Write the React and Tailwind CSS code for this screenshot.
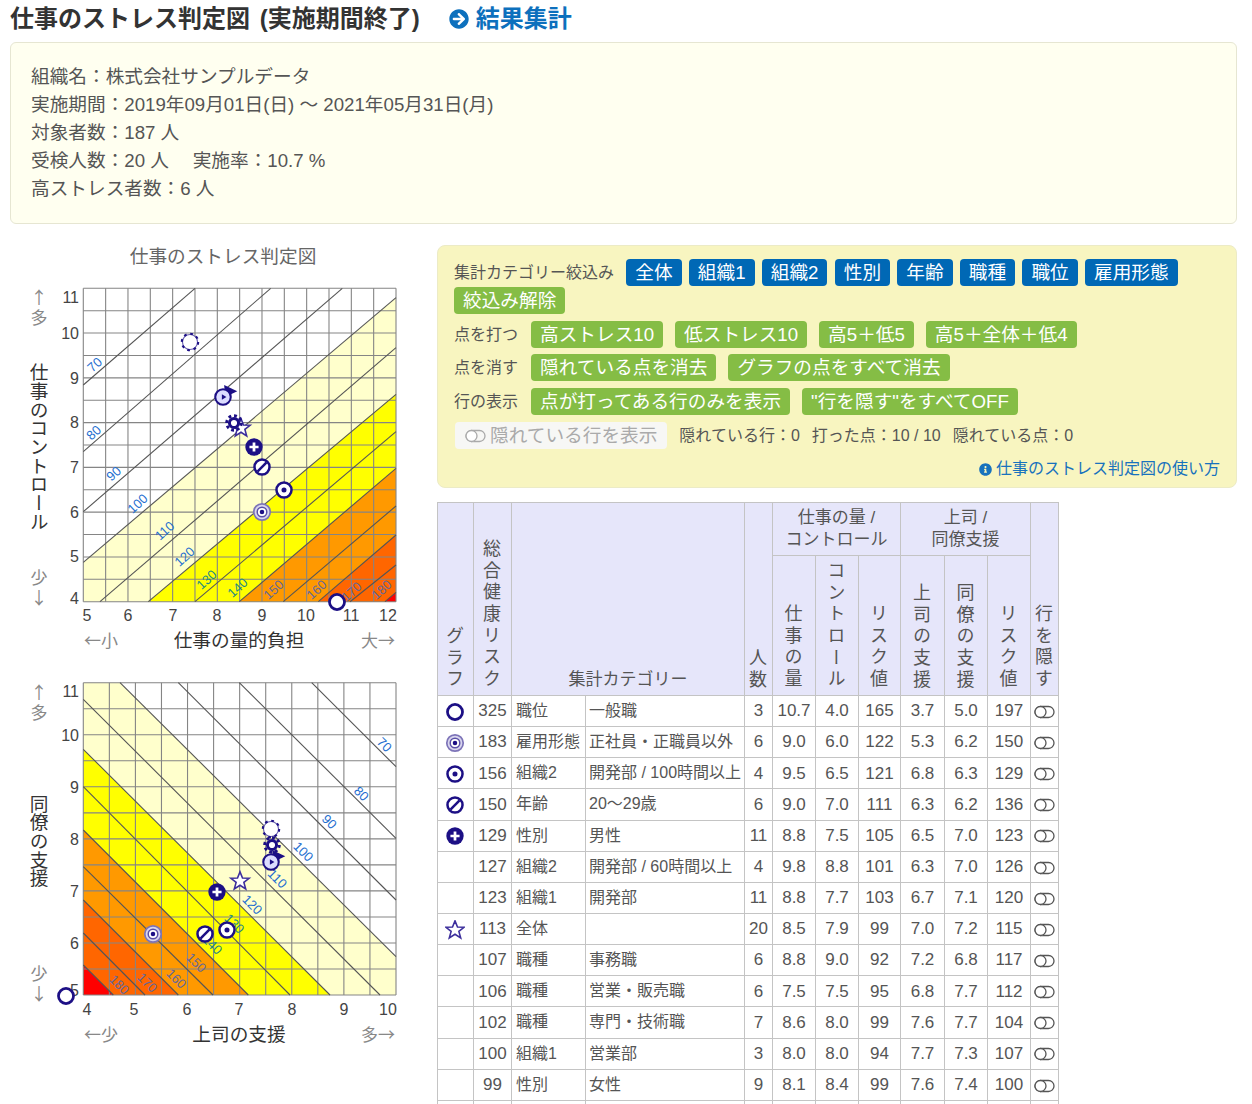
import { FaArrowCircleRight, FaInfoCircle } from "react-icons/fa";

const NAVY = "#1c0f85";

const rows = [
  ["ring", "325", "職位", "一般職", "3", "10.7", "4.0", "165", "3.7", "5.0", "197"],
  ["target", "183", "雇用形態", "正社員・正職員以外", "6", "9.0", "6.0", "122", "5.3", "6.2", "150"],
  ["dot", "156", "組織2", "開発部 / 100時間以上", "4", "9.5", "6.5", "121", "6.8", "6.3", "129"],
  ["slash", "150", "年齢", "20～29歳", "6", "9.0", "7.0", "111", "6.3", "6.2", "136"],
  ["plus", "129", "性別", "男性", "11", "8.8", "7.5", "105", "6.5", "7.0", "123"],
  ["", "127", "組織2", "開発部 / 60時間以上", "4", "9.8", "8.8", "101", "6.3", "7.0", "126"],
  ["", "123", "組織1", "開発部", "11", "8.8", "7.7", "103", "6.7", "7.1", "120"],
  ["star", "113", "全体", "", "20", "8.5", "7.9", "99", "7.0", "7.2", "115"],
  ["", "107", "職種", "事務職", "6", "8.8", "9.0", "92", "7.2", "6.8", "117"],
  ["", "106", "職種", "営業・販売職", "6", "7.5", "7.5", "95", "6.8", "7.7", "112"],
  ["", "102", "職種", "専門・技術職", "7", "8.6", "8.0", "99", "7.6", "7.7", "104"],
  ["", "100", "組織1", "営業部", "3", "8.0", "8.0", "94", "7.7", "7.3", "107"],
  ["", "99", "性別", "女性", "9", "8.1", "8.4", "99", "7.6", "7.4", "100"],
];

const chartOne = {
  height: 430,
  top: 53.3,
  bottom: 366.7,
  title: "仕事のストレス判定図",
  xTitle: "仕事の量的負担",
  yTitle: "仕事のコントロール",
  yTitleY: 212,
  low: "←小",
  high: "大→",
  upper: 54,
  lower: 334,
  xLabelY: 386,
  axisY: 412,
  gridX: 14,
  gridY: 14,
  bands: [
    ["#ffffcc", "83.3,327.3 396,62.7 396,366.7 83.3,366.7"],
    ["#ffff00", "148.3,366.7 396,159.3 396,366.7"],
    ["#ff9900", "239.3,366.7 396,233.3 396,366.7"],
    ["#ff6600", "318.3,366.7 396,300 396,366.7"],
    ["#ff0000", "385,366.7 396,357.3 396,366.7"],
  ],
  lines: [
    [83.3, 150, 195, 53.3],
    [83.3, 216.7, 270.7, 53.3],
    [83.3, 276.7, 342.3, 53.3],
    [83.3, 327.3, 396, 62.7],
    [100, 366.7, 396, 112.7],
    [148.3, 366.7, 396, 159.3],
    [195, 366.7, 396, 196.7],
    [239.3, 366.7, 396, 233.3],
    [283.3, 366.7, 396, 271],
    [318.3, 366.7, 396, 300],
    [350, 366.7, 396, 330],
    [385, 366.7, 396, 357.3],
  ],
  angle: -42,
  risk: [
    ["70", 95, 130, "#1f6fd0"],
    ["80", 94, 198, "#1f6fd0"],
    ["90", 114, 239, "#1f6fd0"],
    ["100", 138, 269, "#1f6fd0"],
    ["110", 165, 296, "#1f6fd0"],
    ["120", 185, 322, "#1f6fd0"],
    ["130", 207, 345, "#1f8a80"],
    ["140", 238, 353, "#1f8a80"],
    ["150", 274, 355, "#66689a"],
    ["160", 317, 355, "#66689a"],
    ["170", 352, 357, "#66689a"],
    ["180", 382, 355, "#66689a"],
  ],
  yLabels: [["11", 62], ["10", 98], ["9", 143], ["8", 187], ["7", 232], ["6", 277], ["5", 321], ["4", 363]],
  xLabels: [["5", 87], ["6", 128], ["7", 173], ["8", 217], ["9", 262], ["10", 306], ["11", 351], ["12", 388]],
  marks: [
    ["dashed", 190, 107],
    ["flag", 223, 162],
    ["star", 241, 193],
    ["gear", 234, 188],
    ["plus", 254, 212],
    ["slash", 262, 232],
    ["dot", 284, 255],
    ["target", 262, 277],
    ["ring", 337, 367],
  ],
};

const chartTwo = {
  height: 434,
  top: 12.7,
  bottom: 325,
  xTitle: "上司の支援",
  yTitle: "同僚の支援",
  yTitleY: 171,
  low: "←少",
  high: "多→",
  upper: 14,
  lower: 295,
  xLabelY: 345,
  axisY: 371,
  gridX: 12,
  gridY: 12,
  bands: [
    ["#ffffcc", "83.3,12.7 120,12.7 396,286.7 396,325 83.3,325"],
    ["#ffff00", "83.3,79.3 330,325 83.3,325"],
    ["#ff9900", "83.3,160 248.3,325 83.3,325"],
    ["#ff6600", "83.3,230 178.3,325 83.3,325"],
    ["#ff0000", "83.3,295 113.3,325 83.3,325"],
  ],
  lines: [
    [311.7, 12.7, 396, 96.7],
    [239.3, 12.7, 396, 168.3],
    [178.3, 12.7, 396, 230],
    [120, 12.7, 396, 286.7],
    [83.3, 29.3, 380, 325],
    [83.3, 79.3, 330, 325],
    [83.3, 116.7, 290, 325],
    [83.3, 160, 248.3, 325],
    [83.3, 196.7, 213, 325],
    [83.3, 230, 178.3, 325],
    [83.3, 263, 145, 325],
    [83.3, 295, 113.3, 325],
  ],
  angle: 45,
  risk: [
    ["70", 384, 75, "#1f6fd0"],
    ["80", 361, 124, "#1f6fd0"],
    ["90", 329, 152, "#1f6fd0"],
    ["100", 303, 182, "#1f6fd0"],
    ["110", 277, 209, "#1f6fd0"],
    ["120", 252, 235, "#1f6fd0"],
    ["130", 234, 254, "#1f8a80"],
    ["140", 212, 275, "#1f8a80"],
    ["150", 196, 293, "#66689a"],
    ["160", 176, 309, "#66689a"],
    ["170", 147, 313, "#66689a"],
    ["180", 119, 315, "#66689a"],
  ],
  yLabels: [["11", 21], ["10", 65], ["9", 117], ["8", 169], ["7", 221], ["6", 273], ["5", 320]],
  xLabels: [["4", 87], ["5", 134], ["6", 187], ["7", 239], ["8", 292], ["9", 344], ["10", 388]],
  marks: [
    ["dashed", 271, 159],
    ["gear", 272, 175],
    ["flag", 271, 192],
    ["star", 240, 211],
    ["plus", 217, 222],
    ["dot", 227, 260],
    ["slash", 205, 264],
    ["target", 153, 264],
    ["ring", 66, 326],
  ],
};

// the point markers, same drawing on the charts and in the table
const Mark = ({ type, x, y }) => {
  return (
    <g transform={`translate(${x} ${y}) scale(1.14)`}>
      {type === "ring" && <circle r="6.6" fill="#fff" stroke={NAVY} strokeWidth="2.4" />}
      {type === "dot" && (
        <>
          <circle r="6.6" fill="#fff" stroke={NAVY} strokeWidth="2.2" />
          <circle r="2.2" fill={NAVY} />
        </>
      )}
      {type === "target" && (
        <>
          <circle r="7.2" fill="#d9d6ee" stroke="#7d74b8" strokeWidth="1.5" />
          <circle r="4.2" fill="#fff" stroke="#5b50a8" strokeWidth="1.3" />
          <circle r="2" fill={NAVY} />
        </>
      )}
      {type === "slash" && (
        <>
          <circle r="6.6" fill="#fff" stroke={NAVY} strokeWidth="2.2" />
          <path d="M-4 4 L4 -4" stroke={NAVY} strokeWidth="2.2" />
        </>
      )}
      {type === "plus" && (
        <>
          <circle r="7.6" fill={NAVY} />
          <path d="M-4 0 H4 M0 -4 V4" stroke="#fff" strokeWidth="2.4" />
        </>
      )}
      {type === "star" && (
        <polygon
          points="0,-8 2.2,-2.6 8,-2.4 3.4,1.2 5,7 0,3.7 -5,7 -3.4,1.2 -8,-2.4 -2.2,-2.6"
          fill="#fff"
          stroke="#3d2f9c"
          strokeWidth="1.4"
        />
      )}
      {type === "gear" && (
        <>
          <circle r="6.4" fill="none" stroke={NAVY} strokeWidth="2.6" strokeDasharray="2.5 2.5" />
          <circle r="4" fill="#fff" stroke={NAVY} strokeWidth="2.6" />
        </>
      )}
      {type === "dashed" && (
        <>
          <circle r="6.6" fill="#fff" stroke="#6a60b0" strokeWidth="1" />
          <circle r="7.2" fill="none" stroke={NAVY} strokeWidth="1.8" strokeDasharray="2.4 3.25" />
        </>
      )}
      {type === "flag" && (
        <>
          <polygon points="1,-10.5 12.5,-5 2,0" fill={NAVY} />
          <circle r="6.8" fill="#dcdcff" stroke={NAVY} strokeWidth="1.8" />
          <polygon points="-1,-2.5 3,0 -1,2.5" fill={NAVY} />
        </>
      )}
    </g>
  );
};

const Chart = ({ data }) => {
  const { top, bottom } = data;
  const left = 83.3;
  const right = 396;
  const stepX = (right - left) / data.gridX;
  const stepY = (bottom - top) / data.gridY;

  return (
    <svg width="420" height={data.height} viewBox={`0 0 420 ${data.height}`} className="block shrink-0">
      {data.title && (
        <text x="223" y="28" textAnchor="middle" fontSize="18.67" fill="#666">
          {data.title}
        </text>
      )}
      <rect x={left} y={top} width={right - left} height={bottom - top} fill="#fff" />
      {data.bands.map(([color, points]) => (
        <polygon key={color} points={points} fill={color} />
      ))}
      {Array.from({ length: data.gridX + 1 }).map((_, i) => (
        <line key={i} x1={left + i * stepX} x2={left + i * stepX} y1={top} y2={bottom} stroke="#858585" strokeWidth="1.1" />
      ))}
      {Array.from({ length: data.gridY + 1 }).map((_, i) => (
        <line key={i} x1={left} x2={right} y1={top + i * stepY} y2={top + i * stepY} stroke="#858585" strokeWidth="1.1" />
      ))}
      {data.lines.map((l, i) => (
        <line key={i} x1={l[0]} y1={l[1]} x2={l[2]} y2={l[3]} stroke="#555" strokeWidth="1.1" />
      ))}
      {data.risk.map(([label, x, y, color]) => (
        <text
          key={label}
          x={x}
          y={y + 4}
          textAnchor="middle"
          fontSize="13"
          fill={color}
          transform={`rotate(${data.angle} ${x} ${y})`}
        >
          {label}
        </text>
      ))}
      {data.yLabels.map(([label, y]) => (
        <text key={label} x="79" y={y + 6} textAnchor="end" fontSize="16" fill="#444">
          {label}
        </text>
      ))}
      {data.xLabels.map(([label, x]) => (
        <text key={label} x={x} y={data.xLabelY} textAnchor="middle" fontSize="16" fill="#444">
          {label}
        </text>
      ))}
      <g
        className="font-['Noto_Sans_CJK_JP',sans-serif] [writing-mode:vertical-rl] [text-orientation:upright]"
        fontSize="17"
        fill="#888"
        letterSpacing="3.5"
      >
        <text x="39" y={data.upper}>↑多</text>
        <text x="39" y={data.lower}>少↓</text>
      </g>
      <text x="37" y={data.yTitleY} textAnchor="middle" fontSize="18.67" fill="#333" className="[writing-mode:vertical-rl]">
        {data.yTitle}
      </text>
      <g className="font-['Noto_Sans_CJK_JP',sans-serif]" fontSize="17" fill="#888">
        <text x="84" y={data.axisY}>{data.low}</text>
        <text x="395" y={data.axisY} textAnchor="end">{data.high}</text>
      </g>
      <text x="239" y={data.axisY} textAnchor="middle" fontSize="18.67" fill="#333">{data.xTitle}</text>
      {data.marks.map(([type, x, y]) => (
        <Mark key={type} type={type} x={x} y={y} />
      ))}
    </svg>
  );
};

const ToggleIcon = ({ color = "#555" }) => (
  <svg width="21" height="14" viewBox="0 0 21 14" className="inline-block" fill="none" stroke={color} strokeWidth="1.3">
    <rect x="1" y="1.5" width="19" height="11" rx="5.5" />
    <circle cx="6.5" cy="7" r="5.5" fill="#fff" />
  </svg>
);

const Btn = ({ children, color = "green" }) => (
  <span
    className={`inline-block h-[27px] px-[9px] rounded-[4px] text-[18.67px] leading-[27px] text-white whitespace-nowrap ${
      color === "blue" ? "bg-[#0068b5]" : "bg-[#85bd45]"
    }`}
  >
    {children}
  </span>
);

const Vert = ({ children }) => (
  <span className="inline-block mr-[5px] [writing-mode:vertical-rl] tracking-[3.7px] text-[18px] leading-[18px] align-bottom">
    {children}
  </span>
);

const thClass = "border border-[#c4c4c4] bg-[#e6e6fa] font-normal text-[#555] p-0 align-bottom text-center pb-[4px]";
const tdClass = "border border-[#c4c4c4] text-center text-[17px] p-0";

const App = () => {
  return (
    <div className="h-[1104px] overflow-hidden bg-white font-['Liberation_Sans','Noto_Sans_CJK_JP',sans-serif] text-[#555]">
      <div className="flex items-center h-[42px] pl-[10px] pb-[4px]">
        <h1 className="text-[24px] font-bold text-[#333] [word-spacing:3px]">仕事のストレス判定図 (実施期間終了)</h1>
        <FaArrowCircleRight className="ml-[29px] text-[20px] text-[#0d70bd]" />
        <span className="ml-[7px] text-[24px] font-bold text-[#0d70bd]">結果集計</span>
      </div>

      <div className="ml-[10px] mr-[15px] h-[182px] pt-[20px] pl-[20px] rounded-[6px] border border-[#e6e6d2] bg-[#fffff0] text-[18.67px] leading-[28px]">
        <p>組織名：株式会社サンプルデータ</p>
        <p>実施期間：2019年09月01日(日) ～ 2021年05月31日(月)</p>
        <p>対象者数：187 人</p>
        <p>受検人数：20 人　 実施率：10.7 %</p>
        <p>高ストレス者数：6 人</p>
      </div>

      <div className="flex mt-[11px]">
        <div className="w-[420px] shrink-0">
          <Chart data={chartOne} />
          <div className="h-[5px]" />
          <Chart data={chartTwo} />
        </div>

        <div className="ml-[17px] mr-[15px] flex-1 pt-[10px]">
          {/* Filter panel */}
          <div className="h-[243px] rounded-[8px] border border-[#ecebc6] bg-[#f8f5c0] pt-[13px] pl-[16px] pr-[16px] text-[16px]">
            <div className="flex flex-wrap items-center gap-x-[7.25px] gap-y-[1px]">
              <span className="mr-[5px]">集計カテゴリー絞込み</span>
              {["全体", "組織1", "組織2", "性別", "年齢", "職種", "職位", "雇用形態"].map((b) => (
                <Btn key={b} color="blue">{b}</Btn>
              ))}
              <Btn>絞込み解除</Btn>
            </div>
            <div className="flex items-center gap-[12px] mt-[7px]">
              <span className="mr-[1px]">点を打つ</span>
              <Btn>高ストレス10</Btn>
              <Btn>低ストレス10</Btn>
              <Btn>高5＋低5</Btn>
              <Btn>高5＋全体＋低4</Btn>
            </div>
            <div className="flex items-center gap-[12px] mt-[6px]">
              <span className="mr-[1px]">点を消す</span>
              <Btn>隠れている点を消去</Btn>
              <Btn>グラフの点をすべて消去</Btn>
            </div>
            <div className="flex items-center gap-[12px] mt-[7px]">
              <span className="mr-[1px]">行の表示</span>
              <Btn>点が打ってある行のみを表示</Btn>
              <Btn>"行を隠す"をすべてOFF</Btn>
            </div>
            <div className="flex items-center gap-[12px] mt-[7px] ml-[1px]">
              <span className="flex items-center gap-[4px] h-[27px] px-[10px] rounded-[4px] bg-[#f7f7f5] text-[18.67px] text-[#aaa] whitespace-nowrap">
                <ToggleIcon color="#aaa" />
                隠れている行を表示
              </span>
              <span>隠れている行：0</span>
              <span>打った点：10 / 10</span>
              <span>隠れている点：0</span>
            </div>
            <div className="flex items-center justify-end gap-[4px] mt-[8px] text-[#1872bd]">
              <FaInfoCircle className="text-[13px]" />
              <span>仕事のストレス判定図の使い方</span>
            </div>
          </div>

          {/* Ranking table */}
          <table className="mt-[14px] w-[621px] table-fixed border-collapse">
            <colgroup>
              <col className="w-[36px]" />
              <col className="w-[38px]" />
              <col className="w-[74px]" />
              <col className="w-[159px]" />
              <col className="w-[28px]" />
              <col className="w-[43px]" />
              <col className="w-[43px]" />
              <col className="w-[42px]" />
              <col className="w-[44px]" />
              <col className="w-[43px]" />
              <col className="w-[43px]" />
              <col className="w-[28px]" />
            </colgroup>
            <thead>
              <tr className="h-[53px]">
                <th rowSpan={2} className={thClass}><Vert>グラフ</Vert></th>
                <th rowSpan={2} className={thClass}><Vert>総合健康リスク</Vert></th>
                <th rowSpan={2} colSpan={2} className={`${thClass} text-[17px] leading-[22px]`}>集計カテゴリー</th>
                <th rowSpan={2} className={thClass}><Vert>人数</Vert></th>
                <th colSpan={3} className={`${thClass} !align-middle !pb-0 text-[17px] leading-[22px]`}>仕事の量 /<br />コントロール</th>
                <th colSpan={3} className={`${thClass} !align-middle !pb-0 text-[17px] leading-[22px]`}>上司 /<br />同僚支援</th>
                <th rowSpan={2} className={thClass}><Vert>行を隠す</Vert></th>
              </tr>
              <tr className="h-[140px]">
                {["仕事の量", "コントロール", "リスク値", "上司の支援", "同僚の支援", "リスク値"].map((h, i) => (
                  <th key={i} className={thClass}><Vert>{h}</Vert></th>
                ))}
              </tr>
            </thead>
            <tbody>
              {rows.map((r) => (
                <tr key={r[1]} className="h-[31.15px]">
                  <td className={tdClass}>
                    {r[0] && (
                      <svg width="20" height="20" viewBox="0 0 20 20" className="inline-block align-middle -translate-x-[1px]">
                        <Mark type={r[0]} x={10} y={10} />
                      </svg>
                    )}
                  </td>
                  <td className={tdClass}>{r[1]}</td>
                  <td className={`${tdClass} !text-left pl-[4px] !text-[16px] whitespace-nowrap`}>{r[2]}</td>
                  <td className={`${tdClass} !text-left pl-[3px] !text-[16px] whitespace-nowrap`}>{r[3]}</td>
                  {r.slice(4).map((v, i) => (
                    <td key={i} className={tdClass}>{v}</td>
                  ))}
                  <td className={tdClass}><ToggleIcon /></td>
                </tr>
              ))}
              <tr className="h-[31px]">
                {Array.from({ length: 12 }).map((_, i) => (
                  <td key={i} className={tdClass} />
                ))}
              </tr>
            </tbody>
          </table>
        </div>
      </div>
    </div>
  );
};

export default App;
